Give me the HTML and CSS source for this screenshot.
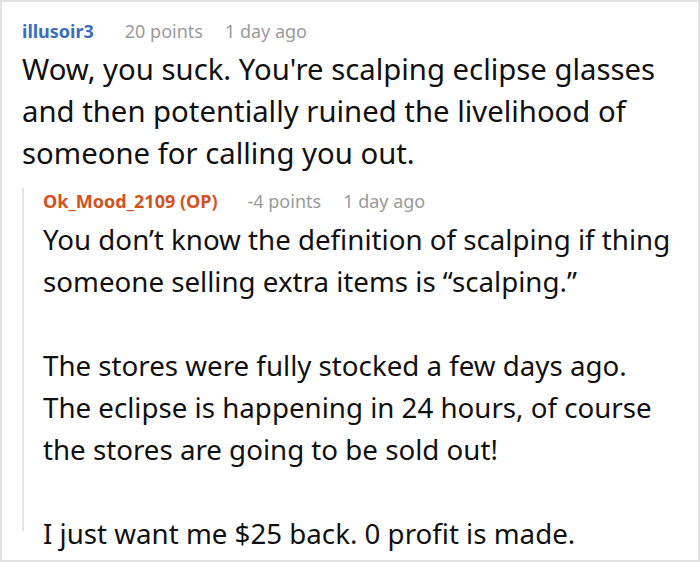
FILE: index.html
```html
<!DOCTYPE html>
<html>
<head>
<meta charset="utf-8">
<link rel="stylesheet" href="styles.css">
</head>
<body>
<div class="frame">
  <div class="comment">
    <div class="meta"><span class="user">illusoir3</span><span class="pts">20 points</span><span class="time">1 day ago</span></div>
    <div class="body top"><p>Wow, you suck. You're scalping eclipse glasses and then potentially ruined the livelihood of someone for calling you out.</p></div>
    <div class="reply">
      <div class="meta"><span class="user op">Ok_Mood_2109 (OP)</span><span class="pts">-4 points</span><span class="time">1 day ago</span></div>
      <div class="body sub">
        <p>You don’t know the definition of scalping if thing someone selling extra items is “scalping.”</p>
        <p>The stores were fully stocked a few days ago. The eclipse is happening in 24 hours, of course the stores are going to be sold out!</p>
        <p>I just want me $25 back. 0 profit is made.</p>
      </div>
    </div>
  </div>
</div>
</body>
</html>
```
FILE: styles.css
```css
html, body { margin: 0; padding: 0; background: #fff; }
body { font-family: "Noto Sans", "Open Sans", sans-serif; color: #111; }
.frame {
  width: 700px; height: 562px; box-sizing: border-box;
  border: 2px solid #e2e2e2; overflow: hidden;
}
.comment { padding: 16px 0 0 20px; }
.meta { font-size: 18px; line-height: 26px; color: #9a9a9a; white-space: nowrap; }
.meta .user { color: #3a6cbf; font-weight: 700; margin-right: 31px; }
.meta .user.op { color: #d4521c; margin-right: 30px; }
.meta .pts { margin-right: 22px; }
.body { margin-top: 4px; }
.body.top { width: 645px; }
.body.top p { font-size: 29.3px; }
.body.sub { width: 633px; }
.body p { margin: 0; font-size: 27.7px; line-height: 42px; }
.body p + p { margin-top: 42px; }
.reply {
  margin-top: 25px; height: 343px;
  border-left: 2px solid #e6e6e6; padding-left: 19px;
}
.reply .meta { margin-top: -11px; }
```
